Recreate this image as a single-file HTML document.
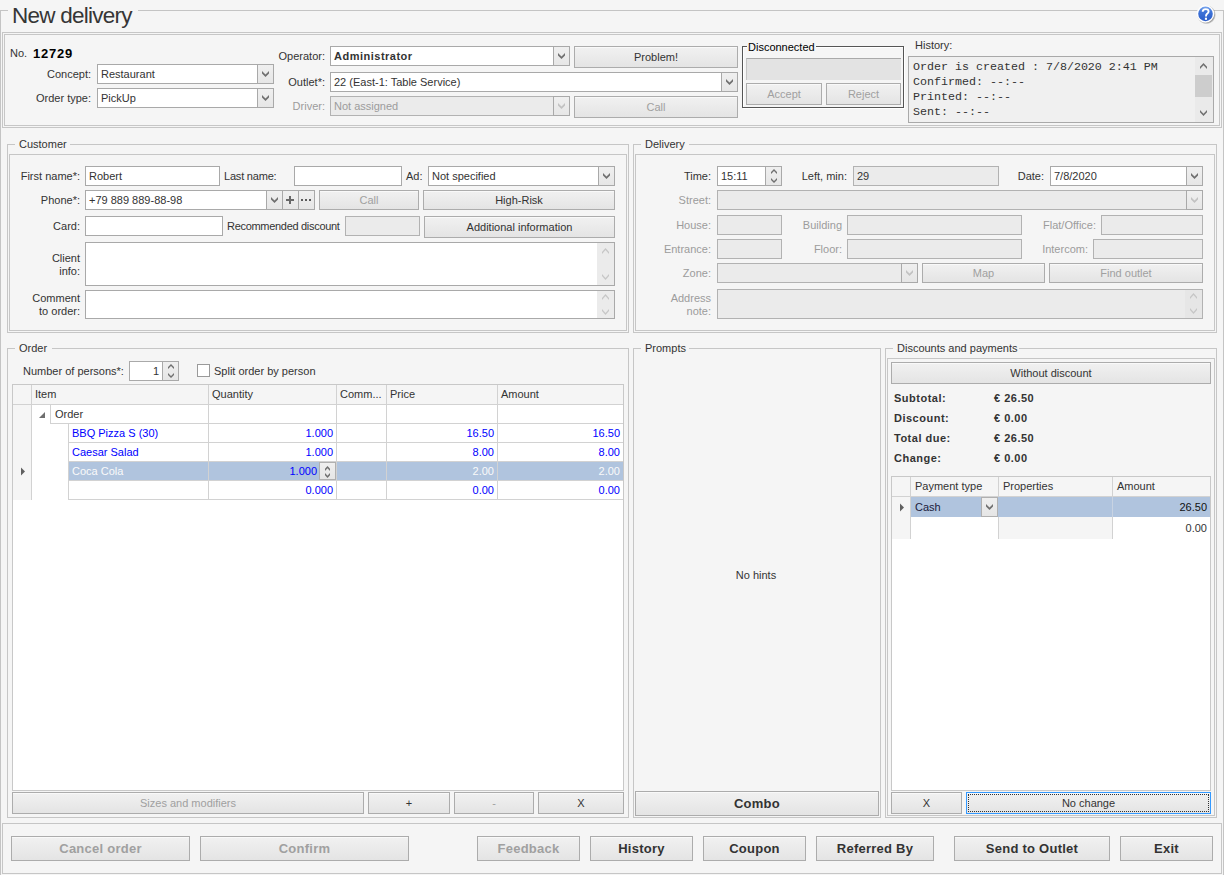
<!DOCTYPE html><html><head><meta charset="utf-8"><title>New delivery</title><style>
*{margin:0;padding:0;box-sizing:border-box}
html,body{width:1224px;height:875px;overflow:hidden;background:#f5f5f5;font-family:"Liberation Sans",sans-serif;font-size:11px;color:#333}
.a{position:absolute}
.t{position:absolute;white-space:nowrap;line-height:13px;color:#333}
.title{font-size:22.5px;line-height:24px;color:#363636;letter-spacing:-0.75px}
.frame{border:1px solid #c4c4c4;border-bottom:none}
.gap{background:#f5f5f5}
.grp{border:1px solid #c6c6c6}
.gtitle{color:#333}
.ed{border:1px solid #a9a9a9;background:#fff}
.ed.dis,.ed.ro{background:#ebebeb;border-color:#b2b2b2}
.dtx{color:#9c9c9c}
.ddb{border:1px solid #a9a9a9;background:linear-gradient(#efefef,#e6e6e6)}
.spb{border-color:#b0b0b0}
.btn{border:1px solid #acacac;background:linear-gradient(#f1f1f1,#e4e4e4);text-align:center;color:#333;white-space:nowrap;box-shadow:inset 0 1px 0 rgba(255,255,255,0.6)}
.btn.dis{color:#a0a0a0}
.b13{font-weight:bold;font-size:13px;letter-spacing:0.25px}
.btn.focus{border-color:#3399ff;outline:1px dotted #333;outline-offset:-3px}
.dgrp{border:1px solid #555;box-shadow:inset 1px 1px 0 #fff, 1px 1px 0 #fff}
.dfield{background:#e3e3e3;border-top:1px solid #a9a9a9;border-left:1px solid #c4c4c4}
.hist{background:#f0f0f0}
.mono{font-family:"Liberation Mono",monospace;font-size:11.67px;line-height:15px;color:#333;white-space:pre}
.sbar2{background:#eaeaea}
.thumb{background:#cdcdcd}
.sbar{background:#ebebeb}
.sbar.dis{background:#e6e6e6}
.chk{border:1px solid #9a9a9a;background:#fff}
.grid{border:1px solid #c8c8c8;background:#fff}
.ghdr{background:#f5f5f5}
.gline{background:#d2d2d2}
.gline2{background:#c8d3e2}
.ind{background:#f5f5f5}
.cell{background:#fff}
.sel{background:#b0c4de}
.blue{color:#0000ff}
.sltx{color:#fafafa}
.bold{font-weight:bold;letter-spacing:0.5px}
.plus{position:absolute;left:4px;top:5px;width:8px;height:8px;background:linear-gradient(#555,#555) center/8px 2px no-repeat,linear-gradient(#555,#555) center/2px 8px no-repeat}
.dots{position:absolute;left:0;top:2px;width:14px;text-align:center;font-size:11px;line-height:13px;color:#555;font-weight:bold}
</style></head><body>
<div class="a frame" style="left:0px;top:10px;width:1224px;height:891px;"></div>
<div class="a gap" style="left:8px;top:0px;width:130px;height:21px;"></div>
<div class="t title" style="left:12px;top:4px">New delivery</div>
<svg class="a" style="left:1195px;top:3px" width="22" height="22" viewBox="0 0 22 22">
<defs><linearGradient id="hg" x1="0" y1="0" x2="0" y2="1"><stop offset="0" stop-color="#7ba7ee"/><stop offset="0.35" stop-color="#3f74d8"/><stop offset="1" stop-color="#2a5cc8"/></linearGradient>
<radialGradient id="hs" cx="0.5" cy="0.5" r="0.5"><stop offset="0.75" stop-color="#444" stop-opacity="0.7"/><stop offset="1" stop-color="#444" stop-opacity="0"/></radialGradient></defs>
<circle cx="11.4" cy="11.7" r="9.6" fill="url(#hs)"/>
<circle cx="10.5" cy="10.85" r="8.8" fill="#fff"/>
<circle cx="10.5" cy="10.85" r="7.3" fill="url(#hg)"/>
<path d="M7.7 8.7 C7.7 7.0 8.9 6.1 10.6 6.1 C12.4 6.1 13.6 7.1 13.6 8.5 C13.6 9.9 12.6 10.4 11.8 11.0 C11.2 11.5 11.0 12.1 11.0 13.5" fill="none" stroke="#fff" stroke-width="1.9"/>
<rect x="9.9" y="14.7" width="2.1" height="2.1" fill="#fff"/>
</svg>
<div class="a grp" style="left:2px;top:32px;width:1220px;height:96px;"></div>
<div class="a grp" style="left:4px;top:34px;width:1216px;height:92px;"></div>
<div class="t " style="left:10px;top:47px;">No.</div>
<div class="t" style="left:33px;top:47px;font-weight:bold;font-size:13px;letter-spacing:0.8px;color:#000">12729</div>
<div class="t " style="right:1133px;top:68px;">Concept:</div>
<div class="a ed" style="left:97px;top:64px;width:177px;height:20px;"></div>
<div class="t " style="left:101px;top:68px;">Restaurant</div>
<div class="a ddb" style="left:257px;top:64px;width:17px;height:20px;"></div>
<svg class="a" style="left:262px;top:71px" width="7" height="6" viewBox="0 0 7 6"><polygon points="0,0 3.5,3.5 7,0 7,2.5 3.5,6 0,2.5" fill="#707070"/></svg>
<div class="t " style="right:1133px;top:92px;">Order type:</div>
<div class="a ed" style="left:97px;top:88px;width:177px;height:20px;"></div>
<div class="t " style="left:101px;top:92px;">PickUp</div>
<div class="a ddb" style="left:257px;top:88px;width:17px;height:20px;"></div>
<svg class="a" style="left:262px;top:95px" width="7" height="6" viewBox="0 0 7 6"><polygon points="0,0 3.5,3.5 7,0 7,2.5 3.5,6 0,2.5" fill="#707070"/></svg>
<div class="t " style="right:899px;top:50px;">Operator:</div>
<div class="a ed" style="left:330px;top:46px;width:240px;height:20px;"></div>
<div class="t " style="left:334px;top:50px;font-weight:bold;letter-spacing:0.5px">Administrator</div>
<div class="a ddb" style="left:553px;top:46px;width:17px;height:20px;"></div>
<svg class="a" style="left:558px;top:53px" width="7" height="6" viewBox="0 0 7 6"><polygon points="0,0 3.5,3.5 7,0 7,2.5 3.5,6 0,2.5" fill="#707070"/></svg>
<div class="a btn" style="left:574px;top:46px;width:164px;height:22px;line-height:20px;">Problem!</div>
<div class="t " style="right:899px;top:76px;">Outlet*:</div>
<div class="a ed" style="left:330px;top:72px;width:408px;height:20px;"></div>
<div class="t " style="left:334px;top:76px;">22 (East-1: Table Service)</div>
<div class="a ddb" style="left:721px;top:72px;width:17px;height:20px;"></div>
<svg class="a" style="left:726px;top:79px" width="7" height="6" viewBox="0 0 7 6"><polygon points="0,0 3.5,3.5 7,0 7,2.5 3.5,6 0,2.5" fill="#707070"/></svg>
<div class="t dtx" style="right:899px;top:100px;">Driver:</div>
<div class="a ed dis" style="left:330px;top:96px;width:240px;height:20px;"></div>
<div class="t dtx" style="left:334px;top:100px;">Not assigned</div>
<div class="a ddb" style="left:553px;top:96px;width:17px;height:20px;"></div>
<svg class="a" style="left:558px;top:103px" width="7" height="6" viewBox="0 0 7 6"><polygon points="0,0 3.5,3.5 7,0 7,2.5 3.5,6 0,2.5" fill="#c2c2c2"/></svg>
<div class="a btn dis" style="left:574px;top:96px;width:164px;height:22px;line-height:20px;">Call</div>
<div class="a dgrp" style="left:742px;top:46px;width:162px;height:62px;"></div>
<div class="a gap" style="left:747px;top:40px;width:69px;height:13px;"></div>
<div class="t " style="left:748px;top:41px;color:#000">Disconnected</div>
<div class="a dfield" style="left:746px;top:58px;width:155px;height:22px;"></div>
<div class="a btn dis" style="left:746px;top:83px;width:76px;height:22px;line-height:20px;">Accept</div>
<div class="a btn dis" style="left:826px;top:83px;width:75px;height:22px;line-height:20px;">Reject</div>
<div class="t " style="left:915px;top:39px;">History:</div>
<div class="a ed hist" style="left:908px;top:56px;width:306px;height:67px;"></div>
<div class="a mono" style="left:913px;top:60px">Order is created : 7/8/2020 2:41 PM<br>Confirmed: --:--<br>Printed: --:--<br>Sent: --:--</div>
<div class="a sbar2" style="left:1195px;top:57px;width:18px;height:65px;"></div>
<div class="a thumb" style="left:1195px;top:75px;width:17px;height:22px;"></div>
<svg class="a" style="left:1200px;top:63px" width="7" height="6" viewBox="0 0 7 6"><polygon points="0,6 3.5,2.2 7,6 7,3.8 3.5,0 0,3.8" fill="#707070"/></svg>
<svg class="a" style="left:1200px;top:110px" width="7" height="6" viewBox="0 0 7 6"><polygon points="0,0 3.5,3.8 7,0 7,2.2 3.5,6 0,2.2" fill="#707070"/></svg>
<div class="a grp" style="left:7px;top:144px;width:622px;height:189px;"></div>
<div class="a gap" style="left:15px;top:138px;width:55px;height:13px;"></div>
<div class="t gtitle" style="left:19px;top:138px;">Customer</div>
<div class="a grp" style="left:9px;top:154px;width:618px;height:177px;"></div>
<div class="t " style="right:1144px;top:170px;">First name*:</div>
<div class="a ed" style="left:85px;top:166px;width:135px;height:20px;"></div>
<div class="t " style="left:89px;top:170px;">Robert</div>
<div class="t " style="left:224px;top:170px;letter-spacing:-0.2px">Last name:</div>
<div class="a ed" style="left:294px;top:166px;width:108px;height:20px;"></div>
<div class="t " style="left:406px;top:170px;">Ad:</div>
<div class="a ed" style="left:428px;top:166px;width:187px;height:20px;"></div>
<div class="t " style="left:432px;top:170px;">Not specified</div>
<div class="a ddb" style="left:598px;top:166px;width:17px;height:20px;"></div>
<svg class="a" style="left:603px;top:173px" width="7" height="6" viewBox="0 0 7 6"><polygon points="0,0 3.5,3.5 7,0 7,2.5 3.5,6 0,2.5" fill="#707070"/></svg>
<div class="t " style="right:1144px;top:194px;">Phone*:</div>
<div class="a ed" style="left:85px;top:190px;width:230px;height:20px;"></div>
<div class="t " style="left:89px;top:194px;">+79 889 889-88-98</div>
<div class="a ddb" style="left:266px;top:190px;width:17px;height:20px;"></div>
<svg class="a" style="left:271px;top:197px" width="7" height="6" viewBox="0 0 7 6"><polygon points="0,0 3.5,3.5 7,0 7,2.5 3.5,6 0,2.5" fill="#707070"/></svg>
<div class="a ddb" style="left:282px;top:190px;width:17px;height:20px;"></div>
<div class="a" style="left:286px;top:199px;width:8px;height:2px;background:#686868"></div>
<div class="a" style="left:289px;top:196px;width:2px;height:8px;background:#686868"></div>
<div class="a ddb" style="left:298px;top:190px;width:17px;height:20px;"></div>
<div class="a" style="left:301px;top:199px;width:2px;height:2px;background:#5a5a5a"></div>
<div class="a" style="left:305px;top:199px;width:2px;height:2px;background:#5a5a5a"></div>
<div class="a" style="left:309px;top:199px;width:2px;height:2px;background:#5a5a5a"></div>
<div class="a btn dis" style="left:319px;top:190px;width:100px;height:20px;line-height:18px;">Call</div>
<div class="a btn" style="left:423px;top:190px;width:192px;height:20px;line-height:18px;">High-Risk</div>
<div class="t " style="right:1144px;top:220px;">Card:</div>
<div class="a ed" style="left:85px;top:216px;width:138px;height:20px;"></div>
<div class="t " style="left:227px;top:220px;letter-spacing:-0.3px">Recommended discount</div>
<div class="a ed dis" style="left:345px;top:216px;width:75px;height:20px;"></div>
<div class="a btn" style="left:424px;top:216px;width:191px;height:22px;line-height:20px;">Additional information</div>
<div class="t" style="right:1144px;top:252px;text-align:right;line-height:13px">Client<br>info:</div>
<div class="a ed" style="left:85px;top:242px;width:530px;height:44px;"></div>
<div class="a sbar" style="left:597px;top:243px;width:17px;height:42px;"></div>
<svg class="a" style="left:602px;top:248px" width="7" height="6" viewBox="0 0 7 6"><polygon points="0,6 3.5,2.1 7,6 7,3.9 3.5,0 0,3.9" fill="#c6c6c6"/></svg>
<svg class="a" style="left:602px;top:274px" width="7" height="6" viewBox="0 0 7 6"><polygon points="0,0 3.5,3.9 7,0 7,2.1 3.5,6 0,2.1" fill="#c6c6c6"/></svg>
<div class="t" style="right:1144px;top:292px;text-align:right;line-height:13px">Comment<br>to order:</div>
<div class="a ed" style="left:85px;top:290px;width:530px;height:29px;"></div>
<div class="a sbar" style="left:597px;top:291px;width:17px;height:27px;"></div>
<svg class="a" style="left:602px;top:294px" width="7" height="6" viewBox="0 0 7 6"><polygon points="0,6 3.5,2.1 7,6 7,3.9 3.5,0 0,3.9" fill="#c6c6c6"/></svg>
<svg class="a" style="left:602px;top:309px" width="7" height="6" viewBox="0 0 7 6"><polygon points="0,0 3.5,3.9 7,0 7,2.1 3.5,6 0,2.1" fill="#c6c6c6"/></svg>
<div class="a grp" style="left:633px;top:144px;width:584px;height:189px;"></div>
<div class="a gap" style="left:641px;top:138px;width:48px;height:13px;"></div>
<div class="t gtitle" style="left:645px;top:138px;">Delivery</div>
<div class="a grp" style="left:635px;top:154px;width:580px;height:177px;"></div>
<div class="t " style="right:513px;top:170px;">Time:</div>
<div class="a ed" style="left:717px;top:166px;width:65px;height:20px;"></div>
<div class="t " style="left:721px;top:170px;">15:11</div>
<div class="a ddb" style="left:765px;top:166px;width:17px;height:20px;"></div>
<svg class="a" style="left:771px;top:169px" width="6" height="5" viewBox="0 0 6 5"><polygon points="0,5 3.0,1.9 6,5 6,3.1 3.0,0 0,3.1" fill="#707070"/></svg>
<svg class="a" style="left:771px;top:178px" width="6" height="5" viewBox="0 0 6 5"><polygon points="0,0 3.0,3.1 6,0 6,1.9 3.0,5 0,1.9" fill="#707070"/></svg>
<div class="t " style="right:377px;top:170px;">Left, min:</div>
<div class="a ed ro" style="left:853px;top:166px;width:146px;height:20px;"></div>
<div class="t " style="left:857px;top:170px;">29</div>
<div class="t " style="right:180px;top:170px;">Date:</div>
<div class="a ed" style="left:1050px;top:166px;width:153px;height:20px;"></div>
<div class="t " style="left:1054px;top:170px;">7/8/2020</div>
<div class="a ddb" style="left:1186px;top:166px;width:17px;height:20px;"></div>
<svg class="a" style="left:1191px;top:173px" width="7" height="6" viewBox="0 0 7 6"><polygon points="0,0 3.5,3.5 7,0 7,2.5 3.5,6 0,2.5" fill="#707070"/></svg>
<div class="t dtx" style="right:513px;top:194px;">Street:</div>
<div class="a ed dis" style="left:717px;top:190px;width:486px;height:20px;"></div>
<div class="a ddb" style="left:1186px;top:190px;width:17px;height:20px;"></div>
<svg class="a" style="left:1191px;top:197px" width="7" height="6" viewBox="0 0 7 6"><polygon points="0,0 3.5,3.5 7,0 7,2.5 3.5,6 0,2.5" fill="#c2c2c2"/></svg>
<div class="t dtx" style="right:513px;top:219px;">House:</div>
<div class="a ed dis" style="left:717px;top:215px;width:65px;height:20px;"></div>
<div class="t dtx" style="right:382px;top:219px;">Building</div>
<div class="a ed dis" style="left:847px;top:215px;width:175px;height:20px;"></div>
<div class="t dtx" style="right:128px;top:219px;">Flat/Office:</div>
<div class="a ed dis" style="left:1101px;top:215px;width:102px;height:20px;"></div>
<div class="t dtx" style="right:513px;top:243px;">Entrance:</div>
<div class="a ed dis" style="left:717px;top:239px;width:65px;height:20px;"></div>
<div class="t dtx" style="right:382px;top:243px;">Floor:</div>
<div class="a ed dis" style="left:847px;top:239px;width:175px;height:20px;"></div>
<div class="t dtx" style="right:136px;top:243px;">Intercom:</div>
<div class="a ed dis" style="left:1093px;top:239px;width:110px;height:20px;"></div>
<div class="t dtx" style="right:513px;top:267px;">Zone:</div>
<div class="a ed dis" style="left:717px;top:263px;width:201px;height:20px;"></div>
<div class="a ddb" style="left:901px;top:263px;width:17px;height:20px;"></div>
<svg class="a" style="left:906px;top:270px" width="7" height="6" viewBox="0 0 7 6"><polygon points="0,0 3.5,3.5 7,0 7,2.5 3.5,6 0,2.5" fill="#c2c2c2"/></svg>
<div class="a btn dis" style="left:922px;top:263px;width:123px;height:20px;line-height:18px;">Map</div>
<div class="a btn dis" style="left:1049px;top:263px;width:154px;height:20px;line-height:18px;">Find outlet</div>
<div class="t dtx" style="right:513px;top:292px;text-align:right;line-height:13px">Address<br>note:</div>
<div class="a ed dis" style="left:717px;top:289px;width:486px;height:30px;"></div>
<div class="a sbar dis" style="left:1185px;top:290px;width:17px;height:28px;"></div>
<svg class="a" style="left:1190px;top:293px" width="7" height="6" viewBox="0 0 7 6"><polygon points="0,6 3.5,2.1 7,6 7,3.9 3.5,0 0,3.9" fill="#c6c6c6"/></svg>
<svg class="a" style="left:1190px;top:308px" width="7" height="6" viewBox="0 0 7 6"><polygon points="0,0 3.5,3.9 7,0 7,2.1 3.5,6 0,2.1" fill="#c6c6c6"/></svg>
<div class="a grp" style="left:7px;top:348px;width:622px;height:470px;"></div>
<div class="a gap" style="left:15px;top:342px;width:37px;height:13px;"></div>
<div class="t gtitle" style="left:19px;top:342px;">Order</div>
<div class="t " style="left:23px;top:365px;">Number of persons*:</div>
<div class="a ed" style="left:129px;top:361px;width:50px;height:20px;"></div>
<div class="t " style="right:1065px;top:365px;">1</div>
<div class="a ddb" style="left:162px;top:361px;width:17px;height:20px;"></div>
<svg class="a" style="left:168px;top:364px" width="6" height="5" viewBox="0 0 6 5"><polygon points="0,5 3.0,1.9 6,5 6,3.1 3.0,0 0,3.1" fill="#707070"/></svg>
<svg class="a" style="left:168px;top:373px" width="6" height="5" viewBox="0 0 6 5"><polygon points="0,0 3.0,3.1 6,0 6,1.9 3.0,5 0,1.9" fill="#707070"/></svg>
<div class="a chk" style="left:197px;top:364px;width:13px;height:13px;"></div>
<div class="t " style="left:214px;top:365px;">Split order by person</div>
<div class="a grid" style="left:12px;top:384px;width:612px;height:407px;"></div>
<div class="a ghdr" style="left:13px;top:385px;width:610px;height:19px;"></div>
<div class="a gline" style="left:13px;top:404px;width:610px;height:1px;"></div>
<div class="a gline" style="left:31px;top:385px;width:1px;height:19px;"></div>
<div class="a gline" style="left:208px;top:385px;width:1px;height:19px;"></div>
<div class="a gline" style="left:336px;top:385px;width:1px;height:19px;"></div>
<div class="a gline" style="left:386px;top:385px;width:1px;height:19px;"></div>
<div class="a gline" style="left:497px;top:385px;width:1px;height:19px;"></div>
<div class="t " style="left:35px;top:388px;">Item</div>
<div class="t " style="left:212px;top:388px;">Quantity</div>
<div class="t " style="left:340px;top:388px;">Comm...</div>
<div class="t " style="left:390px;top:388px;">Price</div>
<div class="t " style="left:501px;top:388px;">Amount</div>
<div class="a ind" style="left:13px;top:405px;width:18px;height:95px;"></div>
<div class="a gline" style="left:31px;top:405px;width:1px;height:95px;"></div>
<div class="a cell" style="left:32px;top:405px;width:18px;height:19px;"></div>
<div class="a cell" style="left:50px;top:405px;width:573px;height:18px;"></div>
<div class="a gline" style="left:50px;top:405px;width:1px;height:19px;"></div>
<div class="a gline" style="left:50px;top:423px;width:573px;height:1px;"></div>
<svg class="a" style="left:38px;top:411px" width="8" height="8" viewBox="0 0 8 8"><path d="M7 1 L7 7 L1 7 Z" fill="#6f6f6f"/></svg>
<div class="t " style="left:55px;top:408px;">Order</div>
<div class="a cell" style="left:51px;top:424px;width:17px;height:76px;"></div>
<div class="a cell" style="left:32px;top:424px;width:19px;height:76px;"></div>
<div class="a cell" style="left:69px;top:424px;width:554px;height:18px;"></div>
<div class="a gline" style="left:68px;top:424px;width:1px;height:19px;"></div>
<div class="a gline" style="left:68px;top:442px;width:555px;height:1px;"></div>
<div class="t blue" style="left:72px;top:427px;">BBQ Pizza S (30)</div>
<div class="t blue" style="right:891px;top:427px;">1.000</div>
<div class="t blue" style="right:730px;top:427px;">16.50</div>
<div class="t blue" style="right:604px;top:427px;">16.50</div>
<div class="a cell" style="left:69px;top:443px;width:554px;height:18px;"></div>
<div class="a gline" style="left:68px;top:443px;width:1px;height:19px;"></div>
<div class="a gline" style="left:68px;top:461px;width:555px;height:1px;"></div>
<div class="t blue" style="left:72px;top:446px;">Caesar Salad</div>
<div class="t blue" style="right:891px;top:446px;">1.000</div>
<div class="t blue" style="right:730px;top:446px;">8.00</div>
<div class="t blue" style="right:604px;top:446px;">8.00</div>
<div class="a sel" style="left:69px;top:462px;width:554px;height:18px;"></div>
<div class="a gline" style="left:68px;top:462px;width:1px;height:19px;"></div>
<div class="a gline" style="left:68px;top:480px;width:555px;height:1px;"></div>
<div class="t sltx" style="left:72px;top:465px;">Coca Cola</div>
<div class="t blue" style="right:907px;top:465px;">1.000</div>
<div class="a ddb spb" style="left:319px;top:462px;width:17px;height:18px;"></div>
<svg class="a" style="left:325px;top:466px" width="5" height="5" viewBox="0 0 5 5"><polygon points="0,5 2.5,2.2 5,5 5,2.8 2.5,0 0,2.8" fill="#707070"/></svg>
<svg class="a" style="left:325px;top:473px" width="5" height="5" viewBox="0 0 5 5"><polygon points="0,0 2.5,2.8 5,0 5,2.2 2.5,5 0,2.2" fill="#707070"/></svg>
<div class="t sltx" style="right:730px;top:465px;">2.00</div>
<div class="t sltx" style="right:604px;top:465px;">2.00</div>
<div class="a cell" style="left:69px;top:481px;width:554px;height:18px;"></div>
<div class="a gline" style="left:68px;top:481px;width:1px;height:19px;"></div>
<div class="a gline" style="left:68px;top:499px;width:555px;height:1px;"></div>
<div class="t blue" style="right:891px;top:484px;">0.000</div>
<div class="t blue" style="right:730px;top:484px;">0.00</div>
<div class="t blue" style="right:604px;top:484px;">0.00</div>
<div class="a gline" style="left:208px;top:405px;width:1px;height:95px;"></div>
<div class="a gline" style="left:336px;top:405px;width:1px;height:95px;"></div>
<div class="a gline" style="left:386px;top:405px;width:1px;height:95px;"></div>
<div class="a gline" style="left:497px;top:405px;width:1px;height:95px;"></div>
<svg class="a" style="left:20px;top:467px" width="6" height="9" viewBox="0 0 6 9"><path d="M1 0.5 L5 4.5 L1 8.5 Z" fill="#606060"/></svg>
<div class="a btn dis" style="left:12px;top:792px;width:352px;height:22px;line-height:20px;">Sizes and modifiers</div>
<div class="a btn" style="left:368px;top:792px;width:82px;height:22px;line-height:20px;">+</div>
<div class="a btn dis" style="left:454px;top:792px;width:80px;height:22px;line-height:20px;">-</div>
<div class="a btn" style="left:538px;top:792px;width:86px;height:22px;line-height:20px;">X</div>
<div class="a grp" style="left:633px;top:348px;width:248px;height:470px;"></div>
<div class="a gap" style="left:641px;top:342px;width:48px;height:13px;"></div>
<div class="t gtitle" style="left:645px;top:342px;">Prompts</div>
<div class="t " style="left:556px;width:400px;text-align:center;top:569px;">No hints</div>
<div class="a btn b13" style="left:635px;top:791px;width:244px;height:25px;line-height:23px;">Combo</div>
<div class="a grp" style="left:885px;top:348px;width:332px;height:470px;"></div>
<div class="a gap" style="left:893px;top:342px;width:126px;height:13px;"></div>
<div class="t gtitle" style="left:897px;top:342px;">Discounts and payments</div>
<div class="a grp" style="left:887px;top:358px;width:328px;height:458px;"></div>
<div class="a btn" style="left:891px;top:362px;width:320px;height:22px;line-height:20px;">Without discount</div>
<div class="t bold" style="left:894px;top:392px;">Subtotal:</div>
<div class="t bold" style="left:994px;top:392px;">€ 26.50</div>
<div class="t bold" style="left:894px;top:412px;">Discount:</div>
<div class="t bold" style="left:994px;top:412px;">€ 0.00</div>
<div class="t bold" style="left:894px;top:432px;">Total due:</div>
<div class="t bold" style="left:994px;top:432px;">€ 26.50</div>
<div class="t bold" style="left:894px;top:452px;">Change:</div>
<div class="t bold" style="left:994px;top:452px;">€ 0.00</div>
<div class="a grid" style="left:891px;top:476px;width:320px;height:315px;"></div>
<div class="a ghdr" style="left:892px;top:477px;width:318px;height:19px;"></div>
<div class="a gline" style="left:892px;top:496px;width:318px;height:1px;"></div>
<div class="a gline" style="left:910px;top:477px;width:1px;height:19px;"></div>
<div class="a gline" style="left:998px;top:477px;width:1px;height:19px;"></div>
<div class="a gline" style="left:1112px;top:477px;width:1px;height:19px;"></div>
<div class="t " style="left:915px;top:480px;">Payment type</div>
<div class="t " style="left:1003px;top:480px;">Properties</div>
<div class="t " style="left:1117px;top:480px;">Amount</div>
<div class="a ind" style="left:892px;top:497px;width:18px;height:42px;"></div>
<div class="a gline" style="left:910px;top:497px;width:1px;height:42px;"></div>
<div class="a sel" style="left:911px;top:497px;width:299px;height:20px;"></div>
<div class="a gline2" style="left:1112px;top:497px;width:1px;height:20px;"></div>
<div class="t " style="left:915px;top:501px;color:#1b1b3b">Cash</div>
<div class="a ddb spb" style="left:981px;top:497px;width:17px;height:20px;"></div>
<svg class="a" style="left:986px;top:504px" width="7" height="6" viewBox="0 0 7 6"><polygon points="0,0 3.5,3.5 7,0 7,2.5 3.5,6 0,2.5" fill="#707070"/></svg>
<div class="t " style="right:17px;top:501px;color:#111">26.50</div>
<div class="a cell" style="left:911px;top:517px;width:87px;height:22px;"></div>
<div class="a ind" style="left:999px;top:517px;width:113px;height:22px;"></div>
<div class="a cell" style="left:1113px;top:517px;width:97px;height:22px;"></div>
<div class="a gline" style="left:998px;top:517px;width:1px;height:22px;"></div>
<div class="a gline" style="left:1112px;top:517px;width:1px;height:22px;"></div>
<div class="t " style="right:17px;top:522px;color:#333">0.00</div>
<svg class="a" style="left:899px;top:503px" width="6" height="9" viewBox="0 0 6 9"><path d="M1 0.5 L5 4.5 L1 8.5 Z" fill="#606060"/></svg>
<div class="a btn" style="left:891px;top:792px;width:71px;height:22px;line-height:20px;">X</div>
<div class="a btn focus" style="left:966px;top:792px;width:245px;height:22px;line-height:20px;">No change</div>
<div class="a grp" style="left:2px;top:823px;width:1220px;height:51px;"></div>
<div class="a btn dis b13" style="left:11px;top:836px;width:179px;height:25px;line-height:23px;">Cancel order</div>
<div class="a btn dis b13" style="left:200px;top:836px;width:209px;height:25px;line-height:23px;">Confirm</div>
<div class="a btn dis b13" style="left:477px;top:836px;width:103px;height:25px;line-height:23px;">Feedback</div>
<div class="a btn b13" style="left:590px;top:836px;width:103px;height:25px;line-height:23px;">History</div>
<div class="a btn b13" style="left:703px;top:836px;width:103px;height:25px;line-height:23px;">Coupon</div>
<div class="a btn b13" style="left:816px;top:836px;width:118px;height:25px;line-height:23px;">Referred By</div>
<div class="a btn b13" style="left:954px;top:836px;width:156px;height:25px;line-height:23px;">Send to Outlet</div>
<div class="a btn b13" style="left:1120px;top:836px;width:93px;height:25px;line-height:23px;">Exit</div>
</body></html>
